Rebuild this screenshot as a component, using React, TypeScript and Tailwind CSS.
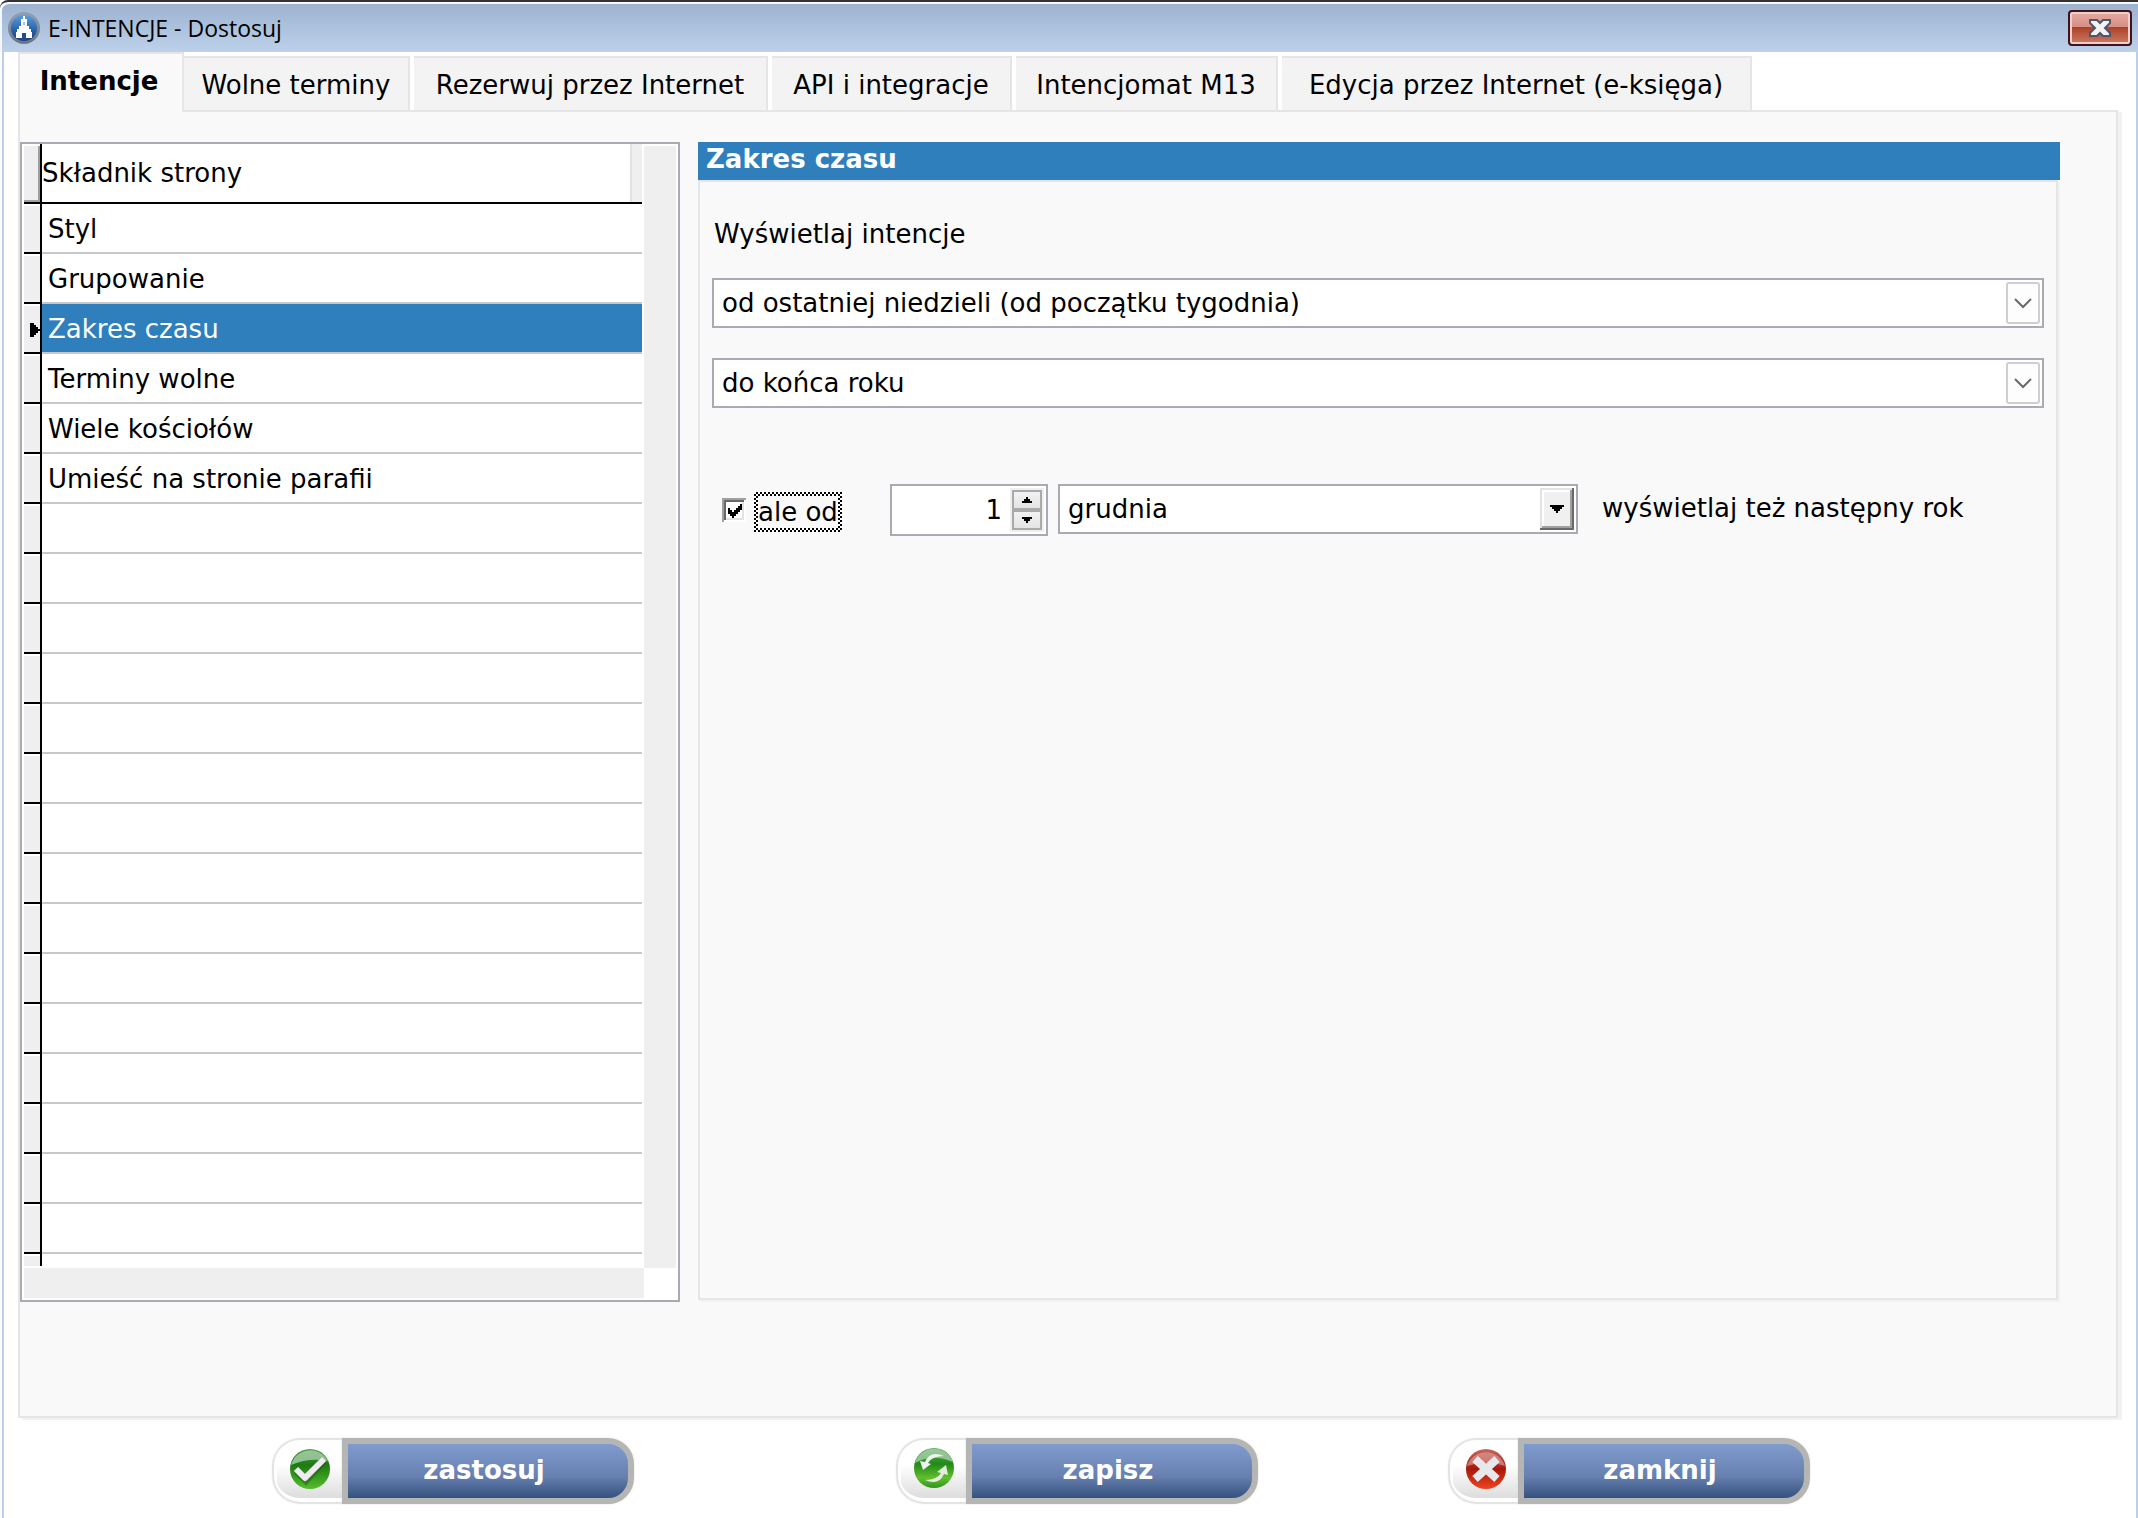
import { useState } from 'react'
import type { ReactNode } from 'react'
import clsx from 'clsx'

const TABS = [
  { label: 'Intencje', width: 'w-[166px]' },
  { label: 'Wolne terminy', width: 'w-[226px]' },
  { label: 'Rezerwuj przez Internet', width: 'w-[354px]' },
  { label: 'API i integracje', width: 'w-[240px]' },
  { label: 'Intencjomat M13', width: 'w-[262px]' },
  { label: 'Edycja przez Internet (e-księga)', width: 'w-[470px]' },
]

const COMPONENTS = [
  'Styl',
  'Grupowanie',
  'Zakres czasu',
  'Terminy wolne',
  'Wiele kościołów',
  'Umieść na stronie parafii',
]

const ROW_COUNT = 21

const MONTHS = [
  'stycznia', 'lutego', 'marca', 'kwietnia', 'maja', 'czerwca',
  'lipca', 'sierpnia', 'września', 'października', 'listopada', 'grudnia',
]

const AppIcon = () => (
  <svg className="size-8" viewBox="0 0 32 32" aria-hidden="true">
    <defs>
      <linearGradient id="appRing" x1="0" y1="0" x2="0" y2="1">
        <stop offset="0" stopColor="#8fa0b8" />
        <stop offset="1" stopColor="#6c7484" />
      </linearGradient>
      <linearGradient id="appFill" x1="0" y1="0" x2="0" y2="1">
        <stop offset="0" stopColor="#5c9fdc" />
        <stop offset="0.6" stopColor="#2560a8" />
        <stop offset="1" stopColor="#1c3f78" />
      </linearGradient>
    </defs>
    <circle cx="16" cy="16" r="16" fill="url(#appRing)" />
    <circle cx="16" cy="16" r="13" fill="url(#appFill)" />
    <path d="M15 4h2v3h2v7h2v3h2v3h1v6h-6v-5h-4v5H8v-6h1v-3h2v-3h2V7h2z" fill="#fff" />
    <path d="M14 21h4v7h-4z" fill="#1f4d8e" />
    <path d="M15 10h2v3h-2z" fill="#a9c6e8" />
  </svg>
)

const CheckIcon = () => (
  <svg className="size-[42px]" viewBox="0 0 42 42" aria-hidden="true">
    <defs>
      <linearGradient id="okFill" x1="0" y1="0" x2="0" y2="1">
        <stop offset="0" stopColor="#4f9a45" />
        <stop offset="0.4" stopColor="#1d7a12" />
        <stop offset="1" stopColor="#55bd2c" />
      </linearGradient>
    </defs>
    <circle cx="21" cy="21" r="20" fill="url(#okFill)" />
    <path d="M2 17A20 20 0 0 1 39 13Q20 9 2 17z" fill="#a9cfae" opacity="0.8" />
    <path d="M8 23l9 9L35 12" fill="none" stroke="#1b5a10" strokeWidth="8" opacity="0.5" />
    <path d="M7 21l9 9L35 11" fill="none" stroke="#efeaf4" strokeWidth="6" strokeLinejoin="round" />
  </svg>
)

const RefreshIcon = () => (
  <svg className="size-[42px]" viewBox="0 0 42 42" aria-hidden="true">
    <defs>
      <linearGradient id="saveFill" x1="0" y1="0" x2="0" y2="1">
        <stop offset="0" stopColor="#5fa85c" />
        <stop offset="0.4" stopColor="#228a18" />
        <stop offset="0.75" stopColor="#62bf2d" />
        <stop offset="1" stopColor="#2f9420" />
      </linearGradient>
    </defs>
    <circle cx="21" cy="20" r="20" fill="url(#saveFill)" />
    <path d="M2 15A20 20 0 0 1 40 14Q20 5 2 15z" fill="#b5d5b8" opacity="0.7" />
    <path d="M31 8Q17 2 12 14l-5-1 3 9 8-6-3-1Q19 8 31 8z" fill="#eef3ee" />
    <path d="M12 32Q26 38 31 26l4 1-2-10-9 7 4 1Q24 32 12 32z" fill="#e4ecdf" />
  </svg>
)

const CloseIcon = () => (
  <svg className="size-[42px]" viewBox="0 0 42 42" aria-hidden="true">
    <defs>
      <linearGradient id="closeFill" x1="0" y1="0" x2="0" y2="1">
        <stop offset="0" stopColor="#c9665c" />
        <stop offset="0.5" stopColor="#a8170b" />
        <stop offset="1" stopColor="#ef4420" />
      </linearGradient>
    </defs>
    <circle cx="21" cy="21" r="20" fill="url(#closeFill)" />
    <path d="M2 18A20 20 0 0 1 40 18Q21 11 2 18z" fill="#dfa9a3" opacity="0.6" />
    <path d="M10 11l22 20M32 11L10 31" stroke="#e6e8ec" strokeWidth="8" />
  </svg>
)

const TitleBar = () => (
  <header className="flex h-[52px] items-center rounded-tl-lg border-t-2 border-[#333] bg-linear-to-b from-[#9bb1ce] to-[#bdd1ea] pt-[2px] pr-[6px] pl-2 shadow-[inset_2px_2px_0_#f4f8fb]">
    <AppIcon />
    <h1 className="ml-2 flex-1 font-['Open_Sans','Noto_Sans',sans-serif] text-[23px] leading-8 text-black">
      E-INTENCJE - Dostosuj
    </h1>
    <button
      type="button"
      aria-label="Zamknij okno"
      className="flex h-9 w-16 items-center justify-center rounded-[4px] border-2 border-[#43121f] bg-linear-to-b from-[#e3a99f] from-0% via-[#d58d80] via-45% to-[#c9705c] shadow-[inset_0_0_0_2px_#efd0ca]"
    >
      <span className="m-[2px] flex h-7 w-14 items-center justify-center bg-[linear-gradient(#e2a79d,#d78f84_46%,#ab3f26_46%,#c8755f)]">
        <svg className="h-[18px] w-[22px]" viewBox="0 0 22 18" aria-hidden="true">
          <path
            d="M1 1h7l3 3 3-3h7v3l-5 5 5 5v3h-7l-3-3-3 3H1v-3l5-5-5-5z"
            fill="#f3f3f3"
            stroke="#50566a"
            strokeWidth="2"
          />
        </svg>
      </span>
    </button>
  </header>
)

const ComponentTable = ({ active, onSelect }: { active: number; onSelect: (i: number) => void }) => (
  <div className="w-[660px] flex-none border-2 border-[#abaab2] bg-white px-[2px] pb-[2px]">
    <div className="flex">
      <div className="flex-1">
        <table className="w-full table-fixed border-separate border-spacing-0 text-left">
          <thead>
            <tr className="h-[60px]">
              <td className="w-[18px] border-r-2 border-b-2 border-black bg-[#efefef] p-0 shadow-[inset_0_2px_0_#fff,inset_-2px_-2px_0_#a0a0a0]" />
              <th scope="col" className="border-b-2 border-black p-0 font-normal">
                Składnik strony
              </th>
              <td className="w-3 border-b-2 border-black bg-[#efefef] p-0 shadow-[inset_2px_0_0_#e2e2e2]" />
            </tr>
          </thead>
          <tbody>
            {Array.from({ length: ROW_COUNT }, (_, i) => (
              <tr key={i} className="h-[50px]" onClick={() => i < COMPONENTS.length && onSelect(i)}>
                <td className="border-r-2 border-b-2 border-black bg-[#efefef] p-0 pt-1 shadow-[inset_0_2px_0_#fff]">
                  {i === active && (
                    <svg className="ml-auto h-[14px] w-[10px]" viewBox="0 0 10 14" aria-hidden="true">
                      <path d="M0 0h4v2h2v2h2v2h2v2H8v2H6v2H4v2H0z" />
                    </svg>
                  )}
                </td>
                <td
                  colSpan={2}
                  className={clsx(
                    'border-b-2 border-[#c8c8c8] p-0 pt-[2px] pl-[6px]',
                    i === active && 'bg-[#2f7fbd] text-white',
                  )}
                >
                  {COMPONENTS[i]}
                </td>
              </tr>
            ))}
          </tbody>
        </table>
        <div className="h-3 w-[18px] border-r-2 border-black bg-[#efefef] shadow-[inset_0_2px_0_#fff]" />
      </div>
      <div className="mt-[2px] -mb-[2px] ml-[2px] w-8 bg-[#efefef]" />
    </div>
    <div className="mt-[2px] mr-8 h-[30px] bg-[#efefef]" />
  </div>
)

const FlatSelect = ({ label, children }: { label: string; children: ReactNode }) => (
  <div className="relative">
    <select
      aria-label={label}
      className="block h-[50px] w-full appearance-none border-2 border-[#abaab2] bg-white pr-10 pl-2"
    >
      {children}
    </select>
    <span className="pointer-events-none absolute top-1 right-1 flex h-[42px] w-[34px] items-center justify-center rounded-[3px] border-2 border-[#cfcfcf] bg-[#fdfdfd]">
      <svg className="h-3 w-[18px]" viewBox="0 0 18 12" fill="none" aria-hidden="true">
        <path d="M1 2l8 8 8-8" stroke="#6a6a6a" strokeWidth="2" />
      </svg>
    </span>
  </div>
)

const SpinButton = ({ label, path, onClick }: { label: string; path: string; onClick: () => void }) => (
  <button
    type="button"
    aria-label={label}
    onClick={onClick}
    className="flex flex-1 items-center justify-center bg-linear-to-b from-[#f2f2f2] to-[#e4e4e4]"
  >
    <svg className="h-[6px] w-[10px]" viewBox="0 0 10 6" aria-hidden="true">
      <path d={path} />
    </svg>
  </button>
)

const YearRow = () => {
  const [checked, setChecked] = useState(true)
  const [day, setDay] = useState(1)

  return (
    <div className="mt-[76px] flex h-[52px] items-center pl-[10px]">
      <span className="relative flex size-6">
        <input
          id="nextYear"
          type="checkbox"
          checked={checked}
          onChange={(e) => setChecked(e.target.checked)}
          className="size-6 appearance-none bg-white shadow-[inset_2px_2px_0_#a0a0a0,inset_-2px_-2px_0_#fff,inset_4px_4px_0_#696969,inset_-4px_-4px_0_#e3e3e3]"
        />
        {checked && (
          <svg className="pointer-events-none absolute top-[6px] left-[6px] h-[14px] w-[14px]" viewBox="0 0 14 14" aria-hidden="true">
            <path d="M0 4h2v2h2v2h2V6h2V4h2V2h2V0h2v6h-2v2h-2v2H8v2H6v2H4v-2H2v-2H0z" />
          </svg>
        )}
      </span>
      <label
        htmlFor="nextYear"
        className="mt-1 ml-2 w-[88px] bg-[repeating-conic-gradient(#000_0_25%,#fff_0_50%)] bg-[length:4px_4px] p-1"
      >
        <span className="block bg-[#f9f9f9] leading-8 whitespace-nowrap">ale od</span>
      </label>
      <div className="ml-12 flex h-[52px] w-[158px] border-2 border-[#abaab2] bg-white p-[2px]">
        <input
          type="number"
          aria-label="Dzień"
          value={day}
          onChange={(e) => setDay(Number(e.target.value))}
          className="w-0 flex-1 [appearance:textfield] pr-2 text-right [&::-webkit-inner-spin-button]:appearance-none"
        />
        <div className="flex w-[34px] flex-col border-2 border-[#efefef]">
          <div className="flex flex-1 flex-col gap-1 border-2 border-[#a9a9a9] bg-[#a9a9a9]">
            <SpinButton label="Zwiększ" path="M4 0h2v2h2v2h2v2H0V4h2V2h2z" onClick={() => setDay(day + 1)} />
            <SpinButton label="Zmniejsz" path="M0 0h10v2H8v2H6v2H4V4H2V2H0z" onClick={() => setDay(day - 1)} />
          </div>
        </div>
      </div>
      <div className="relative mb-[2px] ml-[10px] w-[520px]">
        <select
          aria-label="Miesiąc"
          defaultValue="grudnia"
          className="block h-[50px] w-full appearance-none border-2 border-[#abaab2] bg-white pr-10 pl-2"
        >
          {MONTHS.map((month) => (
            <option key={month}>{month}</option>
          ))}
        </select>
        <span className="pointer-events-none absolute top-1 right-1 flex h-[42px] w-[34px] items-center justify-center bg-[#f0f0f0] shadow-[inset_-2px_-2px_0_#696969,inset_2px_2px_0_#e3e3e3,inset_-4px_-4px_0_#a0a0a0,inset_4px_4px_0_#fff]">
          <svg className="h-2 w-[14px]" viewBox="0 0 14 8" aria-hidden="true">
            <path d="M0 0h14v2h-2v2h-2v2H8v2H6V6H4V4H2V2H0z" />
          </svg>
        </span>
      </div>
      <span className="mb-1 ml-6 whitespace-nowrap">wyświetlaj też następny rok</span>
    </div>
  )
}

const ActionButton = ({ icon, label, className }: { icon: ReactNode; label: string; className: string }) => (
  <button type="button" className={clsx('flex h-[66px] w-[362px] flex-none', className)}>
    <span className="flex h-full w-[70px] items-center justify-center rounded-l-[28px] border-2 border-r-0 border-[#e4e4e2] bg-linear-to-b from-white from-40% to-[#d9d9d9] pb-1 pl-1 shadow-[inset_3px_3px_0_#fff,inset_0_-4px_0_#fff,0_0_2px_#eee]">
      {icon}
    </span>
    <span className="flex h-full flex-1 items-center justify-center rounded-r-[26px] border-[6px] border-[#b5b5b3] bg-linear-to-b from-[#809cce] via-[#6780b0] via-60% to-[#35527e] pr-2 pb-[2px] font-bold text-white shadow-[0_0_2px_#d8d8d6]">
      {label}
    </span>
  </button>
)

const App = () => {
  const [tab, setTab] = useState(0)
  const [active, setActive] = useState(2)

  return (
    <div className="flex min-h-screen flex-col bg-white font-['DejaVu_Sans',Verdana,sans-serif] text-[26px] leading-8 text-black">
      <TitleBar />
      <main className="ml-[2px] flex flex-1 flex-col border-x-2 border-[#b9cfea] pr-[18px] pl-[14px]">
        <div role="tablist" className="flex h-[58px] items-end">
          {TABS.map(({ label, width }, i) => (
            <button
              key={label}
              type="button"
              role="tab"
              aria-selected={i === tab}
              onClick={() => setTab(i)}
              className={clsx(
                'flex-none border-t-2 border-r-2 border-[#e5e5e5] whitespace-nowrap',
                width,
                i === tab
                  ? 'relative -mb-[2px] h-[60px] border-l-2 bg-[#f9f9f9] pr-1 pb-1 font-bold'
                  : 'h-[54px] bg-[#f3f3f3] pt-[2px]',
                i > 1 && 'ml-1',
              )}
            >
              {label}
            </button>
          ))}
        </div>

        <section className="border-2 border-[#e5e5e5] bg-[#f9f9f9] pt-[30px] pb-[114px] shadow-[4px_2px_0_#f2f2f2]">
          <div className="flex pr-14">
            <ComponentTable active={active} onSelect={setActive} />
            <div className="ml-[18px] flex flex-1 flex-col">
              <h2 className="h-[38px] bg-[#2f7fbd] pl-2 leading-[34px] font-bold text-white">{COMPONENTS[active]}</h2>
              <div className="mr-[2px] mb-[2px] flex-1 border-2 border-[#e5e5e5] px-3 pt-9 shadow-[2px_2px_0_#f2f2f2]">
                <p className="mb-7 pl-[2px]">Wyświetlaj intencje</p>
                <div className="flex flex-col gap-[30px]">
                  <FlatSelect label="Początek zakresu">
                    <option>od ostatniej niedzieli (od początku tygodnia)</option>
                  </FlatSelect>
                  <FlatSelect label="Koniec zakresu">
                    <option>do końca roku</option>
                  </FlatSelect>
                </div>
                <YearRow />
              </div>
            </div>
          </div>
        </section>

        <footer className="flex pt-5">
          <ActionButton icon={<CheckIcon />} label="zastosuj" className="ml-[254px]" />
          <ActionButton icon={<RefreshIcon />} label="zapisz" className="ml-[262px]" />
          <ActionButton icon={<CloseIcon />} label="zamknij" className="ml-[190px]" />
        </footer>
      </main>
    </div>
  )
}

export default App
